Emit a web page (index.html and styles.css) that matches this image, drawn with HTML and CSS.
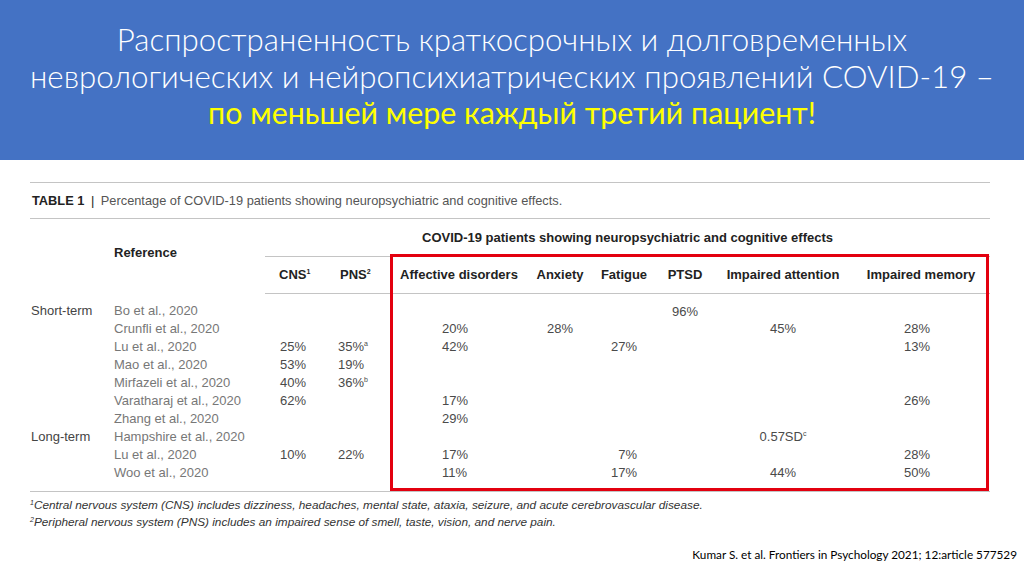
FILE: index.html
```html
<!DOCTYPE html>
<html lang="ru">
<head>
<meta charset="utf-8">
<title>COVID-19</title>
<link rel="stylesheet" href="styles.css">
</head>
<body>
<div class="slide">
  <header class="banner">
    <div class="t-line">Распространенность краткосрочных и долговременных</div>
    <div class="t-line">неврологических и нейропсихиатрических проявлений COVID-19 –</div>
    <div class="t-line hl">по меньшей мере каждый третий пациент!</div>
  </header>
  <main class="content">
    <div class="tbl-wrap">
      <div class="caption"><b>TABLE 1</b> <span class="bar">|</span> Percentage of COVID-19 patients showing neuropsychiatric and cognitive effects.</div>
      <table class="data">
        <colgroup>
          <col class="c-grp"><col class="c-ref"><col class="c-cns"><col class="c-pns">
          <col class="c-aff"><col class="c-anx"><col class="c-fat"><col class="c-pts"><col class="c-att"><col class="c-mem">
        </colgroup>
        <thead>
          <tr class="h1">
            <th colspan="2" rowspan="2" class="ref-h">Reference</th>
            <th colspan="8" class="grp-h">COVID-19 patients showing neuropsychiatric and cognitive effects</th>
          </tr>
          <tr class="h2">
            <th class="l cns">CNS<sup>1</sup></th>
            <th class="l pns">PNS<sup>2</sup></th>
            <th>Affective disorders</th>
            <th>Anxiety</th>
            <th>Fatigue</th>
            <th>PTSD</th>
            <th>Impaired attention</th>
            <th>Impaired memory</th>
          </tr>
        </thead>
        <tbody>
          <tr class="first"><td class="grp">Short-term</td><td class="ref">Bo et al., 2020</td><td class="cns"></td><td class="pns"></td><td></td><td></td><td></td><td>96%</td><td></td><td></td></tr>
          <tr><td class="grp"></td><td class="ref">Crunfli et al., 2020</td><td class="cns"></td><td class="pns"></td><td class="aff">20%</td><td>28%</td><td></td><td></td><td>45%</td><td class="mem">28%</td></tr>
          <tr><td class="grp"></td><td class="ref">Lu et al., 2020</td><td class="cns">25%</td><td class="pns">35%<sup>a</sup></td><td class="aff">42%</td><td></td><td class="fat">27%</td><td></td><td></td><td class="mem">13%</td></tr>
          <tr><td class="grp"></td><td class="ref">Mao et al., 2020</td><td class="cns">53%</td><td class="pns">19%</td><td></td><td></td><td></td><td></td><td></td><td></td></tr>
          <tr><td class="grp"></td><td class="ref">Mirfazeli et al., 2020</td><td class="cns">40%</td><td class="pns">36%<sup>b</sup></td><td></td><td></td><td></td><td></td><td></td><td></td></tr>
          <tr><td class="grp"></td><td class="ref">Varatharaj et al., 2020</td><td class="cns">62%</td><td class="pns"></td><td class="aff">17%</td><td></td><td></td><td></td><td></td><td class="mem">26%</td></tr>
          <tr><td class="grp"></td><td class="ref">Zhang et al., 2020</td><td class="cns"></td><td class="pns"></td><td class="aff">29%</td><td></td><td></td><td></td><td></td><td></td></tr>
          <tr><td class="grp">Long-term</td><td class="ref">Hampshire et al., 2020</td><td class="cns"></td><td class="pns"></td><td></td><td></td><td></td><td></td><td>0.57SD<sup>c</sup></td><td></td></tr>
          <tr><td class="grp"></td><td class="ref">Lu et al., 2020</td><td class="cns">10%</td><td class="pns">22%</td><td class="aff">17%</td><td></td><td class="fat">7%</td><td></td><td></td><td class="mem">28%</td></tr>
          <tr class="last"><td class="grp"></td><td class="ref">Woo et al., 2020</td><td class="cns"></td><td class="pns"></td><td class="aff">11%</td><td></td><td class="fat">17%</td><td></td><td>44%</td><td class="mem">50%</td></tr>
        </tbody>
      </table>
      <div class="notes">
        <p><sup>1</sup>Central nervous system (CNS) includes dizziness, headaches, mental state, ataxia, seizure, and acute cerebrovascular disease.</p>
        <p><sup>2</sup>Peripheral nervous system (PNS) includes an impaired sense of smell, taste, vision, and nerve pain.</p>
      </div>
      <div class="highlight-box"></div>
    </div>
    <div class="cite">Kumar S. et al. Frontiers in Psychology 2021; 12:article 577529</div>
  </main>
</div>
</body>
</html>
```

FILE: styles.css
```css
* { box-sizing: border-box; }
html, body { margin: 0; padding: 0; }
body { background: #fff; width: 1024px; height: 576px; overflow: hidden; }

.slide { width: 1024px; height: 576px; display: flex; flex-direction: column; }

.banner {
  height: 160px;
  background: #4472c4;
  padding-top: 21px;
  text-align: center;
  font-family: "Lato", "Open Sans", sans-serif;
  font-weight: 300;
  font-size: 31.3px;
  line-height: 36.5px;
  color: #fff;
}
.t-line { white-space: nowrap; }
.t-line.hl { color: #ffff00; font-weight: 400; font-size: 30.4px; }

.content { flex: 1; padding: 22px 0 0 30px; display: flex; flex-direction: column; }

.tbl-wrap { position: relative; width: 960px; }

.caption {
  border-top: 1px solid #c4c4c4;
  border-bottom: 1px solid #c4c4c4;
  height: 37px;
  padding-left: 2px;
  font-family: "Liberation Sans", Arial, sans-serif;
  font-size: 12.8px;
  line-height: 35px;
  color: #555;
}
.caption b { color: #222; }
.caption .bar { color: #222; margin: 0 3px; }

.data {
  width: 960px;
  table-layout: fixed;
  border-collapse: collapse;
  font-family: "Liberation Sans", Arial, sans-serif;
  font-size: 13px;
  color: #4a4a4a;
}
.c-grp { width: 84px; }
.c-ref { width: 151px; }
.c-cns { width: 60px; }
.c-pns { width: 65px; }
.c-aff { width: 138px; }
.c-anx { width: 64px; }
.c-fat { width: 64px; }
.c-pts { width: 58px; }
.c-att { width: 138px; }
.c-mem { width: 138px; }

.data th { font-weight: bold; color: #222; padding: 0; text-align: center; white-space: nowrap; }
.data sup { font-size: 7px; vertical-align: 5px; line-height: 0; }
.data .ref-h { text-align: left; padding-left: 84px; vertical-align: middle; padding-bottom: 7px; }
.h1 th.grp-h { height: 37px; padding-top: 1px; border-bottom: 1px solid #c4c4c4; }
.h2 th { height: 37px; border-bottom: 1px solid #c4c4c4; }
.h2 th.l { text-align: left; }
.h2 th.cns { padding-left: 14px; }
.h2 th.pns { padding-left: 15px; }

.data td { height: 17.9px; padding: 0; line-height: 17.9px; text-align: center; white-space: nowrap; }
.data tr.first td { height: 27px; padding-top: 9px; }
.data tr.last td { height: 27px; padding-bottom: 9px; }
.data tbody tr.last td { border-bottom: 1px solid #c4c4c4; }
.data td.grp { text-align: left; padding-left: 1px; color: #444; }
.data td.ref { text-align: left; color: #777; }
.data td.cns { text-align: left; padding-left: 15px; }
.data td.pns { text-align: left; padding-left: 13px; }
.data td.aff { text-align: left; padding-left: 52px; }
.data td.fat { text-align: right; padding-right: 19px; }
.data td.mem { text-align: right; padding-right: 60px; }

.notes {
  font-family: "Liberation Sans", Arial, sans-serif;
  font-style: italic;
  font-size: 11.8px;
  color: #333;
  padding-top: 5px;
}
.notes p { margin: 0; line-height: 17px; }
.notes sup { font-size: 7px; vertical-align: 4px; line-height: 0; }

.highlight-box {
  position: absolute;
  left: 360px;
  top: 72px;
  width: 599px;
  height: 237px;
  border: 3px solid #e3000f;
}

.cite {
  margin-top: auto;
  margin-bottom: 14px;
  align-self: flex-end;
  margin-right: 7px;
  font-family: "Lato", "Open Sans", sans-serif;
  font-size: 11.75px;
  color: #000;
}
```
